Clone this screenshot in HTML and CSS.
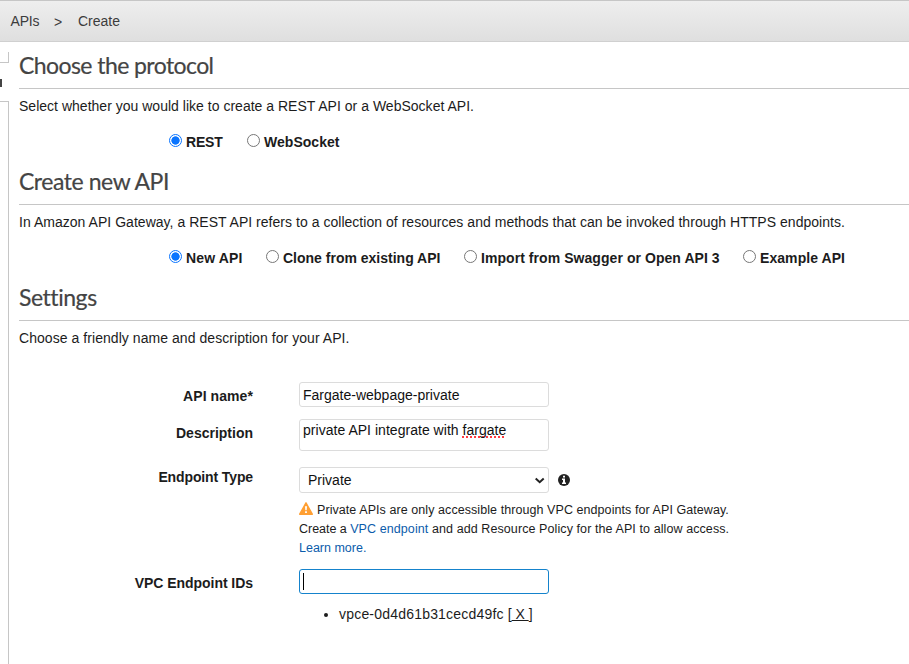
FILE: index.html
```html
<!DOCTYPE html>
<html lang="en">
<head>
<meta charset="utf-8">
<title>Create API</title>
<link rel="stylesheet" href="styles.css">
</head>
<body>
<header class="breadcrumb"><span class="crumb-root">APIs</span><span class="crumb-sep">&gt;</span><span class="crumb-current">Create</span></header>
<div class="layout">
  <aside class="rail">
    <div class="rail-tab"></div>
    <div class="rail-mark"></div>
    <div class="rail-panel"></div>
  </aside>
  <main class="content">
    <section class="section">
      <h2 class="h-protocol">Choose the protocol</h2>
      <p class="p-protocol">Select whether you would like to create a REST API or a WebSocket API.</p>
      <div class="radios">
        <label class="r-rest"><input type="radio" name="protocol" checked><span>REST</span></label>
        <label class="r-ws"><input type="radio" name="protocol"><span>WebSocket</span></label>
      </div>
    </section>
    <section class="section">
      <h2 class="h-create">Create new API</h2>
      <p class="p-create">In Amazon API Gateway, a REST API refers to a collection of resources and methods that can be invoked through HTTPS endpoints.</p>
      <div class="radios">
        <label class="r-new"><input type="radio" name="source" checked><span>New API</span></label>
        <label class="r-clone"><input type="radio" name="source"><span>Clone from existing API</span></label>
        <label class="r-import"><input type="radio" name="source"><span>Import from Swagger or Open API 3</span></label>
        <label class="r-example"><input type="radio" name="source"><span>Example API</span></label>
      </div>
    </section>
    <section class="settings">
      <h2 class="h-settings">Settings</h2>
      <p class="p-settings">Choose a friendly name and description for your API.</p>
      <form class="form">
        <div class="row row-name">
          <label class="name">API name*</label>
          <input class="field" type="text" value="Fargate-webpage-private">
        </div>
        <div class="row row-desc">
          <label class="name">Description</label>
          <div class="field area">private API integrate with <span class="misspelled">fargate</span></div>
        </div>
        <div class="row row-type">
          <label class="name">Endpoint Type</label>
          <div>
            <div class="select-line">
              <div class="field select"><span>Private</span>
                <svg class="chevron" width="11" height="7" viewBox="0 0 11 7"><path d="M1.7 1.5 5.7 5.2 9.7 1.5" fill="none" stroke="#222" stroke-width="2"/></svg>
              </div>
              <svg class="info" width="12" height="12" viewBox="0 0 12 12"><circle cx="6" cy="6" r="6" fill="#222"/><path d="M5 1.8h2v1.7H5zM4 4.6h3v3.9h1V10H4V8.5h1V6H4z" fill="#fff"/></svg>
            </div>
            <div class="note">
              <div><svg class="warn" width="14" height="13" viewBox="0 0 14 13"><path d="M7 .8 13.3 12.2H.7z" fill="#ff9f33" stroke="#ff9f33" stroke-width="1.4" stroke-linejoin="round"/><path d="M6 4.2h2l-.3 4H6.3zM6.1 9.2h1.8V11H6.1z" fill="#fff"/></svg><span>Private APIs are only accessible through VPC endpoints for API Gateway.</span></div>
              <div class="note-create"><span class="note-lead">Create a </span><a>VPC endpoint</a> and add Resource Policy for the API to allow access.</div>
              <div class="note-more"><a>Learn more.</a></div>
            </div>
          </div>
        </div>
        <div class="row row-vpc">
          <label class="name">VPC Endpoint IDs</label>
          <div>
            <div class="field focused"><span class="caret"></span></div>
            <ul class="ids"><li><span class="vpce">vpce-0d4d61b31cecd49fc</span> <span class="remove">[<u>&nbsp;X&nbsp;</u>]</span></li></ul>
          </div>
        </div>
      </form>
    </section>
  </main>
</div>
</body>
</html>
```
FILE: styles.css
```css
* { box-sizing: border-box; }
body {
  margin: 0;
  height: 664px;
  overflow: hidden;
  background: #fff;
  color: #1c1c1c;
  font: 14px/20px "Liberation Sans", Arial, sans-serif;
}
.breadcrumb {
  display: flex;
  height: 42px;
  padding: 10px 0 0 10.5px;
  border-top: 1px solid #c6c6c6;
  border-bottom: 1px solid #d0d0d0;
  background: linear-gradient(#eee, #dfdfdf);
  color: #3c3c3c;
}
.crumb-root { width: 43.5px; letter-spacing: -.2px; }
.crumb-sep { width: 24px; padding-top: 1px; }
.layout { display: flex; height: 622px; }
.rail { width: 9px; margin-right: 10px; display: flex; flex-direction: column; flex: none; }
.rail-tab { height: 11px; margin-top: 10px; border: solid #c6c6c6; border-width: 0 1px 1px 0; }
.rail-mark { width: 2px; height: 8px; margin: 16px 0 14px; background: #444; }
.rail-panel { flex: 1; border: solid #c6c6c6; border-width: 1px 1px 0 0; }
.content { flex: 1; min-width: 0; padding-top: 1px; white-space: nowrap; }
.section { height: 116px; }
h2 {
  height: 46px;
  margin: 0;
  padding-top: 7px;
  border-bottom: 1px solid #c6c6c6;
  color: #444;
  font: 400 23px/30px Lato, sans-serif;
  -webkit-text-stroke: .2px #444;
}
.h-protocol { letter-spacing: -.58px; }
.h-create { letter-spacing: -.45px; }
.h-settings { letter-spacing: -.45px; }
p { margin: 7px 0 16px; }
.p-protocol { letter-spacing: .015px; }
.p-create { letter-spacing: .031px; }
.p-settings { letter-spacing: .055px; }
.radios { display: flex; padding-left: 150px; font-weight: 700; }
.radios label { display: flex; align-items: flex-start; flex: none; }
.r-rest { width: 78px; letter-spacing: -.2px; }
.r-ws { letter-spacing: .03px; }
.r-new { width: 97px; letter-spacing: .15px; }
.r-clone { width: 198px; }
.r-import { width: 279px; letter-spacing: .06px; }
.r-example { letter-spacing: .07px; }
.radios input {
  appearance: none;
  width: 13px;
  height: 13px;
  margin: 2px 4px 0 0;
  border: 1px solid #777;
  border-radius: 50%;
  background: #fff;
}
.radios input:checked {
  border-color: #0a75ff;
  background: radial-gradient(circle, #0a75ff 0 3.8px, #fff 4.5px);
}
.settings p { margin-bottom: 0; }
.form { margin-top: 34px; }
.row { display: flex; }
.name { width: 234px; margin-right: 46px; flex: none; text-align: right; font-weight: 700; }
.row-name { height: 37px; }
.row-desc { height: 48px; }
.row-type { height: 102px; }
.row-name .name { padding-top: 4px; letter-spacing: .08px; }
.row-desc .name { padding-top: 4px; }
.row-type .name { letter-spacing: -.12px; }
.row-vpc .name { padding-top: 4px; letter-spacing: -.05px; }
.field {
  width: 250px;
  height: 25px;
  padding: 0 3px;
  border: 1px solid #dcdcdc;
  border-radius: 3px;
  background: #fff;
  color: #111;
  font: inherit;
}
.area { height: 32px; letter-spacing: .03px; }
.misspelled {
  text-decoration: underline dotted #ff3b40 2px;
  text-underline-offset: 1px;
  text-decoration-skip-ink: none;
}
.select-line { display: flex; align-items: center; }
.select { display: flex; align-items: center; justify-content: space-between; height: 26px; padding-left: 8px; }
.info { margin-left: 9px; }
.note { margin-top: 8px; font-size: 12.5px; line-height: 19px; letter-spacing: .07px; }
.note-create { letter-spacing: .09px; }
.note-lead { letter-spacing: -.03px; }
.note-more { letter-spacing: 0; }
.warn { margin-right: 4px; vertical-align: -1px; }
a { color: #0b5cab; }
.focused { display: flex; align-items: center; border-color: #1583cc; }
.caret { width: 1px; height: 17px; background: #000; }
.ids { margin: 10px 0 0; padding-left: 40px; }
.vpce { letter-spacing: .2px; }
```
